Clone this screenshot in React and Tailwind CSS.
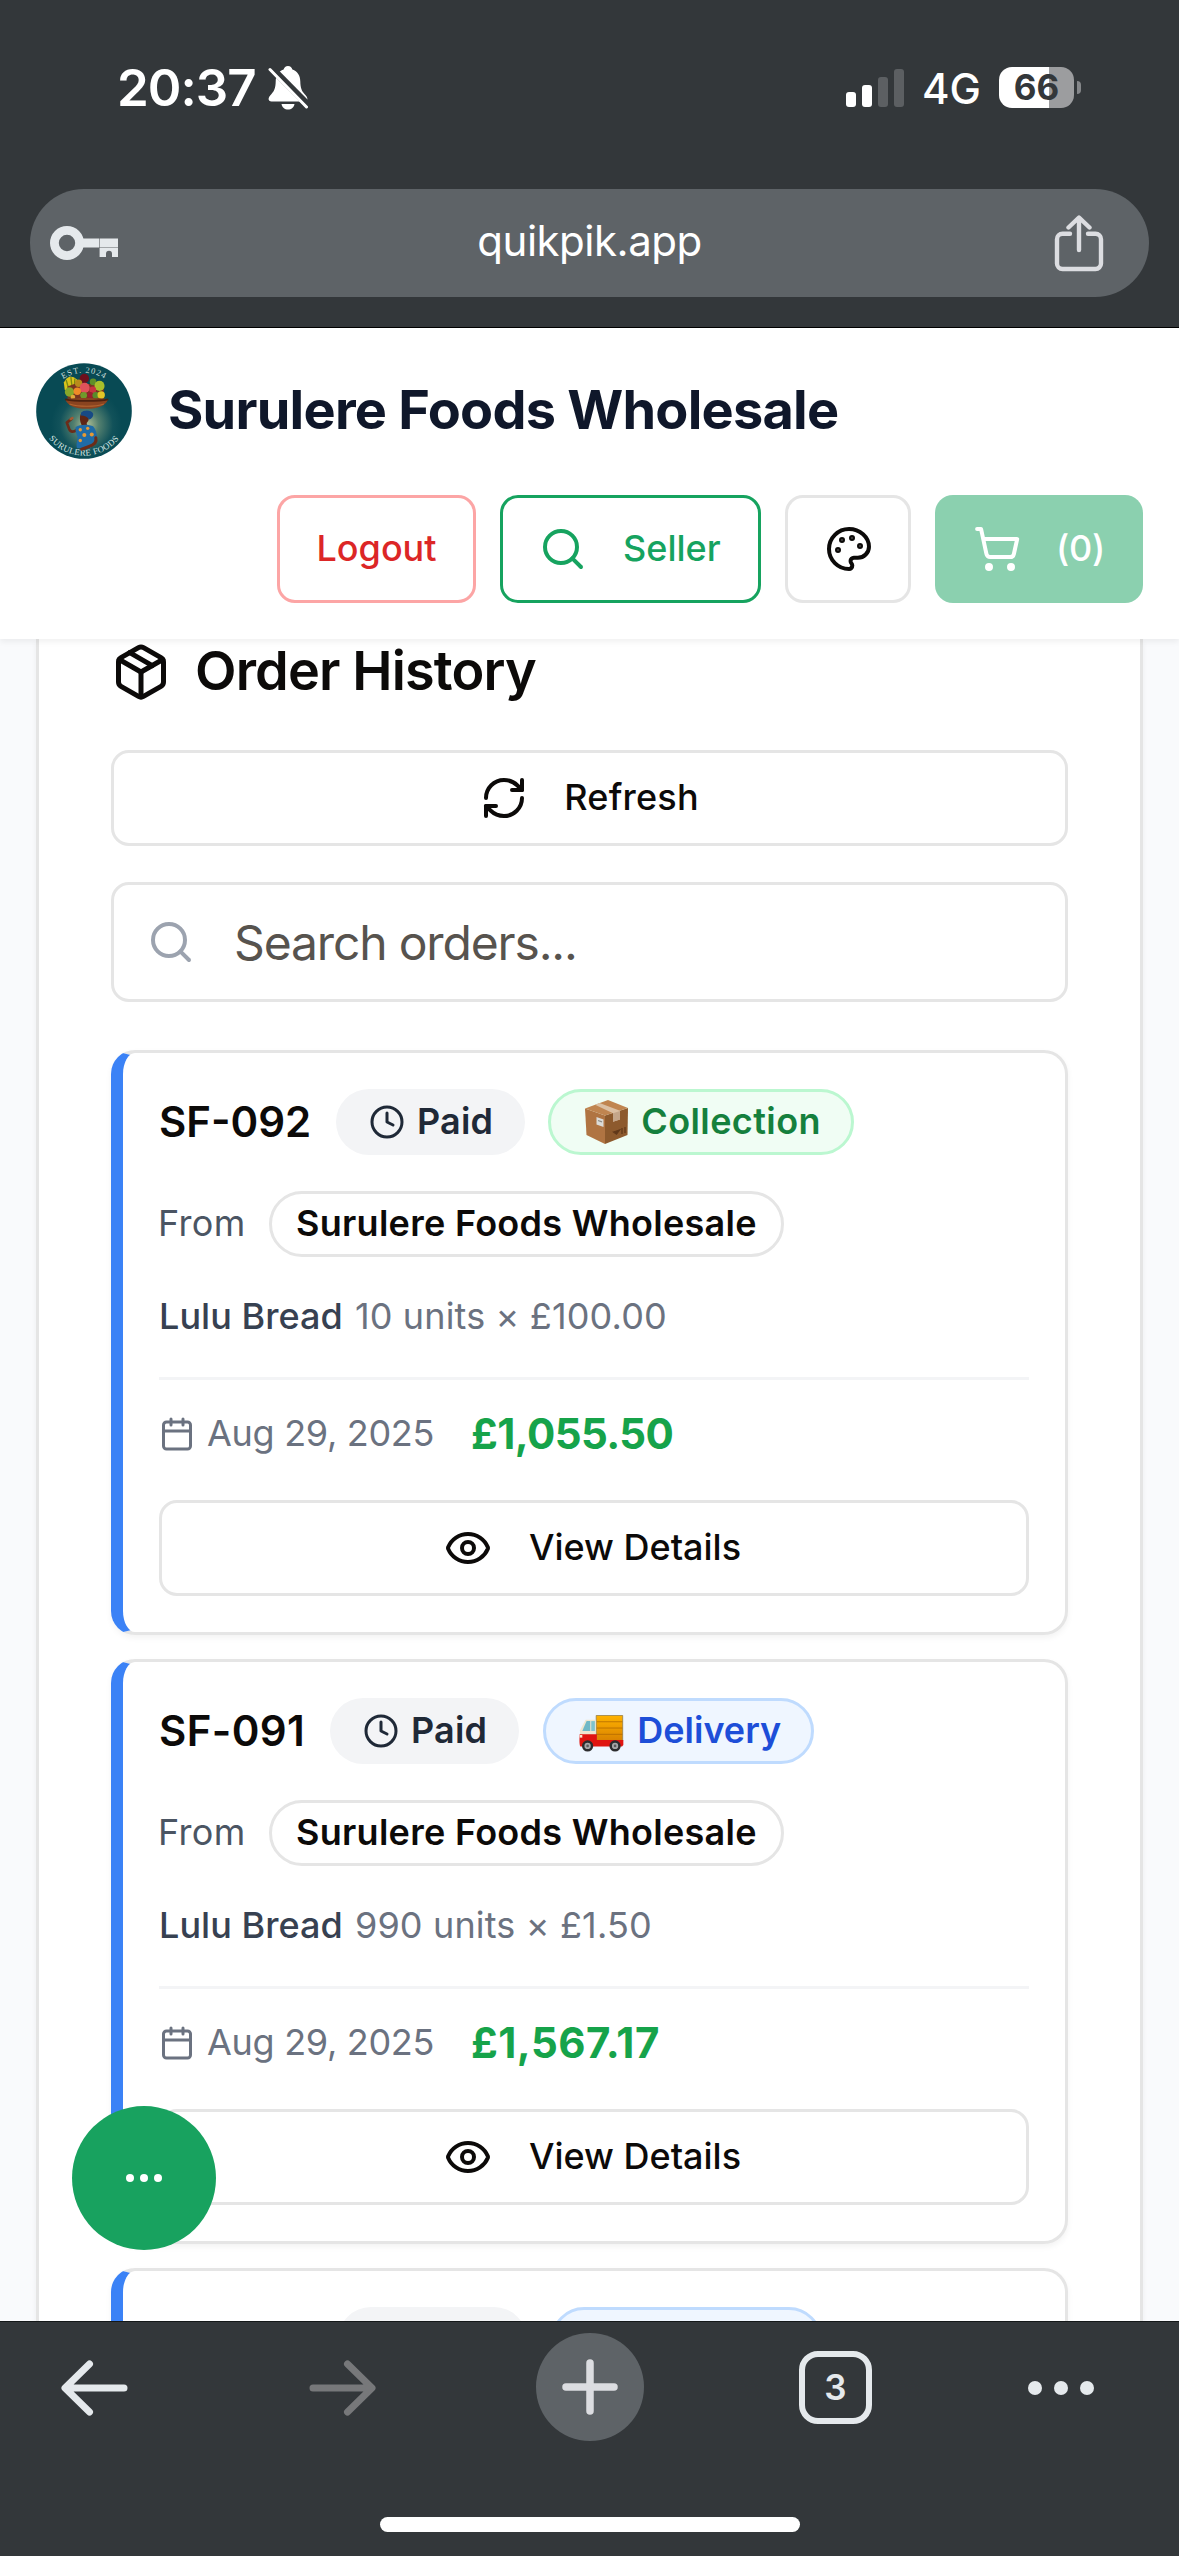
import React from "react";
import { Calendar, Clock, Eye, Package, RefreshCw, Search } from "lucide-react";

function BellOffIcon() {
  return (
    <svg viewBox="0 0 40 44" className="h-[44px] w-[40px]" fill="#fff">
      <path d="M20 0c-2.300 0-4 1.500-4.400 3.600C10.500 5.300 7.800 9.600 7.700 15.500c-.1 6.500-1.500 9.500-4.200 12.500C1.400 30.200.6 31.500.6 33c0 1.500 1.100 2.500 2.900 2.500h33c1.800 0 2.900-1 2.900-2.500 0-1.500-.8-2.800-2.900-5-2.700-3-4.100-6-4.200-12.500-.1-5.900-2.800-10.200-7.900-11.900C24 1.500 22.300 0 20 0z" />
      <path d="M13.500 38h13c-.5 3.300-3.200 5.600-6.500 5.600s-6-2.300-6.500-5.600z" />
      <path d="M3 1.500 41 40" stroke="#33373a" strokeWidth="7" />
      <path d="M2 3.500 38.500 41" stroke="#fff" strokeWidth="3" strokeLinecap="round" />
    </svg>
  );
}

function KeyIcon() {
  return (
    <svg viewBox="0 0 68 34" className="h-[34px] w-[68px]" fill="#e5e9ec">
      <path
        fillRule="evenodd"
        d="M17 0a17 17 0 1 1 0 34 17 17 0 0 1 0-34zm0 8.800a8.200 8.200 0 1 0 0 16.400 8.200 8.200 0 0 0 0-16.400z"
      />
      <path d="M33 12.500h16v9H33zM49.600 12.500H68v9H49.600z" />
      <path d="M49.600 22H68v9h-6v-3.200a3 3 0 0 0-6 0V31h-6.400z" />
    </svg>
  );
}

function ShareIcon() {
  return (
    <svg
      viewBox="0 0 50 57"
      className="h-[57px] w-[50px]"
      fill="none"
      stroke="#dcdde1"
      strokeWidth="4.400"
      strokeLinecap="round"
      strokeLinejoin="round"
    >
      <path d="M16 18.700H8.500a5.500 5.500 0 0 0-5.500 5.500V48.500A5.500 5.500 0 0 0 8.500 54h33a5.500 5.500 0 0 0 5.500-5.500V24.200a5.500 5.500 0 0 0-5.500-5.500H34" />
      <path d="M25 35V3M14.500 12.500 25 2.500l10.500 10" />
    </svg>
  );
}

function PaletteIcon() {
  return (
    <svg
      viewBox="0 0 24 24"
      className="size-12"
      fill="none"
      stroke="#0c0a09"
      strokeWidth="2"
      strokeLinecap="round"
      strokeLinejoin="round"
    >
      <circle cx="13.500" cy="6.500" r=".5" fill="#0c0a09" />
      <circle cx="17.500" cy="10.500" r=".5" fill="#0c0a09" />
      <circle cx="8.500" cy="7.500" r=".5" fill="#0c0a09" />
      <circle cx="6.500" cy="12.500" r=".5" fill="#0c0a09" />
      <path d="M12 2C6.500 2 2 6.500 2 12s4.500 10 10 10c.926 0 1.648-.746 1.648-1.688 0-.437-.18-.835-.437-1.125-.29-.289-.438-.652-.438-1.125a1.640 1.640 0 0 1 1.668-1.668h1.996c3.051 0 5.555-2.503 5.555-5.554C21.965 6.012 17.461 2 12 2z" />
    </svg>
  );
}

function CartIcon() {
  return (
    <svg
      viewBox="0 0 24 24"
      className="size-12"
      fill="none"
      stroke="#fff"
      strokeWidth="2"
      strokeLinecap="round"
      strokeLinejoin="round"
    >
      <circle cx="8" cy="21" r="1" />
      <circle cx="19" cy="21" r="1" />
      <path d="M2.050 2.050h2l2.660 12.420a2 2 0 0 0 2 1.580h9.780a2 2 0 0 0 1.950-1.570l1.650-7.430H5.120" />
    </svg>
  );
}

function BrandLogo() {
  return (
    <svg viewBox="19 42 284 285" className="size-24 shrink-0" role="img">
      <defs>
        <radialGradient id="glow" gradientUnits="userSpaceOnUse" cx="168" cy="225" r="105">
          <stop offset="0" stopColor="#b4c296" />
          <stop offset="0.350" stopColor="#54806f" />
          <stop offset="0.750" stopColor="#12525a" />
          <stop offset="1" stopColor="#084a54" />
        </radialGradient>
        <path id="arcTop" d="M48 184a113 113 0 0 1 226 0" />
        <path id="arcBottom" d="M28 184a133 133 0 0 0 266 0" />
      </defs>
      <circle cx="161" cy="184.500" r="142" fill="url(#glow)" />
      <text fontFamily="Liberation Serif, serif" fontSize="25" letterSpacing="3" fill="#c9dcd8" textAnchor="middle">
        <textPath href="#arcTop" startOffset="50%">EST. 2024</textPath>
      </text>
      <text fontFamily="Liberation Serif, serif" fontSize="26" letterSpacing="1" fill="#dbe8e4" textAnchor="middle">
        <textPath href="#arcBottom" startOffset="50%">SURULERE FOODS</textPath>
      </text>
      <g>
        <path d="M104 122l-3-22 8-12 10-6 12 2 10 8 4 30z" fill="#d9c21c" />
        <path d="M108 92l8 28M122 84l4 32M134 88l-2 28" stroke="#7c8a12" strokeWidth="4" />
        <path d="M112 148V112l20-8h70l18 10v34z" fill="#7a3420" />
        <circle cx="162" cy="88" r="14" fill="#6d0f1c" />
        <circle cx="188" cy="98" r="10" fill="#5f8f28" />
        <circle cx="145" cy="102" r="11" fill="#b98a1c" />
        <circle cx="207" cy="110" r="15" fill="#a9bf2b" />
        <circle cx="118" cy="128" r="14" fill="#86a62a" />
        <circle cx="163" cy="116" r="15" fill="#e0525a" />
        <circle cx="141" cy="126" r="11" fill="#ef8a28" />
        <circle cx="160" cy="138" r="10" fill="#6f9a2b" />
        <circle cx="187" cy="122" r="10" fill="#c73440" />
        <circle cx="180" cy="137" r="9" fill="#9a1f2f" />
        <circle cx="196" cy="138" r="10" fill="#5a8b2a" />
        <circle cx="212" cy="137" r="11" fill="#e3c628" />
        <circle cx="128" cy="143" r="7" fill="#e2a93a" />
      </g>
      <path d="M106 150c20-5 100-5 126 0-6 18-30 28-63 28s-58-10-63-28z" fill="#8a4420" />
      <path d="M105 150c30 6 100 6 128 0" stroke="#4d210f" strokeWidth="5" fill="none" />
      <path d="M118 164c26 9 78 9 102 0" stroke="#b4642f" strokeWidth="3" fill="none" />
      <path d="M151 194c6-4 18-2 24 6 2 10-2 16-6 20l2 14-16 4-2-14c-4-8-6-20-2-30z" fill="#5f2615" />
      <path d="M152 190c6-10 32-10 36 2 2 8-4 16-12 18-4-8-14-12-24-12z" fill="#174a85" />
      <path d="M139 240c-8 8-18 8-22-2l-7-19M110 219l14-11" stroke="#6b2c19" strokeWidth="8" fill="none" strokeLinecap="round" />
      <ellipse cx="124" cy="207" rx="7" ry="4" fill="#a55b34" transform="rotate(-30 124 207)" />
      <path d="M136 232c14-9 40-9 52-2 8 8 12 24 12 36l-14 14-6 16-40-2c-3-10 2-24 2-32-4-10-8-20-6-30z" fill="#1f6ba6" />
      <circle cx="150" cy="240" r="5" fill="#e59a35" />
      <circle cx="172" cy="236" r="5" fill="#e59a35" />
      <circle cx="162" cy="256" r="6" fill="#e59a35" />
      <circle cx="184" cy="254" r="6" fill="#e59a35" />
      <circle cx="150" cy="272" r="5" fill="#e59a35" />
      <path d="M196 264c4 14-8 22-20 26l-22 8" stroke="#6b2c19" strokeWidth="9" fill="none" strokeLinecap="round" />
    </svg>
  );
}

function BoxEmoji() {
  return (
    <svg viewBox="0 0 43 44" className="ml-[4px] mr-[13px] h-[44px] w-[43px]" role="img">
      <path d="M0 8.500 20 15.500V44L1.500 35z" fill="#b07442" />
      <path d="M20 15.500 43 8l-.5 27L20 44z" fill="#8d5a2d" />
      <path d="M0 8.500 23 0l20 8-23 7.500z" fill="#c08550" />
      <path d="M10 4.800 14.500 3 35 10.800v8.700l-7 2.300v-8.500z" fill="#dbc0a4" />
      <path d="M28 13.300l7-2.300v8.500l-7 2.300z" fill="#c4a68a" />
      <path d="M11.500 17l7 2.500v7.500l-7-2.500z" fill="#dcdcd8" />
      <path d="M13 20.500l4 1.400" stroke="#8c8c88" strokeWidth="1.200" />
      <path d="M28.500 32l6-2-3 4zM37 28v6M40 27v6" stroke="#61391a" strokeWidth="1.300" fill="#61391a" />
    </svg>
  );
}

function TruckEmoji() {
  return (
    <svg viewBox="18 46 136 111" className="ml-[3px] mr-[13px] mt-[4px] h-[37px] w-[45px]" role="img">
      <defs>
        <linearGradient id="cargo" x1="0" y1="0" x2="0" y2="1">
          <stop offset="0" stopColor="#ffb300" />
          <stop offset="1" stopColor="#d98200" />
        </linearGradient>
      </defs>
      <path d="M70 47h80v76H70z" fill="url(#cargo)" stroke="#94804a" strokeWidth="2.500" />
      <path d="M72 66h77M72 85h77M72 104h77" stroke="#b36b00" strokeWidth="2.500" />
      <path d="M38 60h30v50H21V92z" fill="#efe6cf" />
      <path d="M41 64h11v30H28z" fill="#6fb8c6" />
      <path d="M55 64h11v30H55z" fill="#7fc3cf" />
      <path d="M20 104h52v17h80v15l-4 5H22c-3-4-3-20-2-37z" fill="#e01410" />
      <path d="M20 106h8v8h-8z" fill="#f8e8d0" />
      <circle cx="44" cy="139" r="17" fill="#2c2c2e" />
      <circle cx="127" cy="139" r="17" fill="#2c2c2e" />
      <circle cx="44" cy="139" r="9.500" fill="#a6a6a8" />
      <circle cx="127" cy="139" r="9.500" fill="#a6a6a8" />
      <circle cx="44" cy="139" r="4" fill="#59595b" />
      <circle cx="127" cy="139" r="4" fill="#59595b" />
    </svg>
  );
}

function StatusBar() {
  return (
    <div className="flex h-[175px] items-center text-white">
      <div className="ml-[117px] text-[51px] font-semibold leading-none tracking-[-1px]">20:37</div>
      <div className="ml-[12px]">
        <BellOffIcon />
      </div>
      <div className="ml-auto mr-[98px] flex items-center">
        <div className="flex h-[38px] items-end gap-[6px]">
          <span className="h-[15px] w-[10px] rounded-[3px] bg-white" />
          <span className="h-[22px] w-[10px] rounded-[3px] bg-white" />
          <span className="h-[30px] w-[10px] rounded-[3px] bg-[#5c5f62]" />
          <span className="h-[38px] w-[10px] rounded-[3px] bg-[#5c5f62]" />
        </div>
        <div className="ml-[18px] mt-[3px] text-[42px] font-medium leading-none">4G</div>
        <div className="ml-[18px] flex h-[41px] w-[75px] items-center justify-center rounded-[13px] bg-[linear-gradient(90deg,#fff_0_50px,#9c9d9f_50px)] text-[35px] font-bold leading-none text-[#33373a]">
          66
        </div>
        <span className="ml-[3px] h-[13px] w-[4px] rounded-r-full bg-[#85878a]" />
      </div>
    </div>
  );
}

function AddressBar() {
  return (
    <div className="mx-[30px] mt-[14px] flex h-[108px] items-center justify-between rounded-full bg-[#5e6367] pl-[20px] pr-[45px]">
      <KeyIcon />
      <span className="ml-[7px] mb-[4px] text-[42px] leading-none tracking-[-0.500px] text-white">quikpik.app</span>
      <ShareIcon />
    </div>
  );
}

function StoreHeader() {
  return (
    <header className="relative z-10 h-[311px] bg-white px-9 pt-[35px] shadow-[0_3px_6px_rgba(0,0,0,0.060)]">
      <div className="flex items-center gap-9">
        <BrandLogo />
        <h1 className="mb-[3px] text-[54px] font-bold leading-none tracking-[-0.750px] text-[#0f172a]">
          Surulere Foods Wholesale
        </h1>
      </div>
      <div className="mt-9 flex justify-end gap-6 text-4xl font-medium">
        <button className="h-[108px] w-[199px] rounded-[18px] border-[3px] border-[#fca5a5] pb-[2px] text-[#dc2626]">
          Logout
        </button>
        <button className="flex h-[108px] w-[261px] items-center gap-9 rounded-[18px] border-[3px] border-[#16a35f] pl-9 text-[#16a35f]">
          <Search className="size-12" />
          <span className="mb-[2px]">Seller</span>
        </button>
        <button className="flex h-[108px] w-[126px] items-center justify-center rounded-[18px] border-[3px] border-[#e5e5e5] pl-px">
          <PaletteIcon />
        </button>
        <button className="flex h-[108px] w-[208px] items-center gap-[35px] rounded-[18px] bg-[#8bd0af] pl-[38px] tracking-[-0.250px] text-white">
          <CartIcon />
          <span className="mb-[2px]">(0)</span>
        </button>
      </div>
    </header>
  );
}

const KINDS = {
  collection: { label: "Collection", Emoji: BoxEmoji, style: "-ml-px border-[#bbf7d0] bg-[#f0fdf4] text-[#15803d] tracking-[0.400px]" },
  delivery: { label: "Delivery", Emoji: TruckEmoji, style: "border-[#bfdbfe] bg-[#eff6ff] text-[#1d4ed8]" },
};

const ORDERS = [
  { id: "SF-092", idWidth: "w-[153px]", kind: "collection", qty: "10 units × £100.00", total: "£1,055.50", totalStyle: "tracking-[-0.600px]" },
  { id: "SF-091", idWidth: "w-[147px] tracking-[0.400px]", kind: "delivery", qty: "990 units × £1.50", total: "£1,567.17", totalStyle: "tracking-[0.450px]" },
  { id: "SF-090", idWidth: "w-[155px]", kind: "delivery", qty: "120 units × £1.50", total: "£1,189.20", totalStyle: "" },
];

function OrderCard({ order }) {
  const { label, Emoji, style } = KINDS[order.kind];
  return (
    <article className="h-[585px] shrink-0 rounded-[24px] border-[3px] border-l-[12px] border-[#e5e5e5] border-l-[#3b82f6] bg-white p-9 text-4xl shadow-[0_3px_6px_rgba(0,0,0,0.050)]">
      <div className="flex h-[66px] items-center gap-6 whitespace-nowrap font-semibold">
        <span className={`${order.idWidth} text-[42px] text-[#0c0a09]`}>{order.id}</span>
        <span className="flex h-[66px] items-center gap-3 rounded-full bg-[#f3f4f6] pl-[33px] pr-[32px] tracking-[0.200px] text-[#1f2937]">
          <Clock className="size-9" />
          <span className="mb-[2px]">Paid</span>
        </span>
        <span className={`flex h-[66px] items-center rounded-full border-[3px] px-[30px] ${style}`}>
          <Emoji />
          <span className="mb-[2px]">{label}</span>
        </span>
      </div>
      <div className="mt-9 flex h-[66px] items-center text-[#4b5563]">
        <span className="-ml-px mb-[2px] w-[111px] tracking-[0.300px]">From</span>
        <span className="flex h-[66px] items-center rounded-full border-[3px] border-[#e5e5e5] px-6 pb-[2px] font-semibold tracking-[0.280px] text-[#0c0a09]">
          Surulere Foods Wholesale
        </span>
      </div>
      <div className="flex h-[120px] items-center gap-3 pb-[2px] tracking-[0.150px] text-[#6b7280]">
        <span className="font-medium tracking-[0.050px] text-[#374151]">Lulu Bread</span>
        <span>{order.qty}</span>
      </div>
      <div className="flex h-[111px] items-center border-t-[3px] border-[#f3f4f6] text-[#6b7280]">
        <Calendar className="size-9" />
        <span className="mb-[2px] ml-3 w-[264px] tracking-[-0.300px]">Aug 29, 2025</span>
        <span className={`text-[42px] font-bold text-[#16a34a] ${order.totalStyle}`}>{order.total}</span>
      </div>
      <button className="mt-3 flex h-24 w-full items-center justify-center gap-[37px] rounded-[18px] border-[3px] border-[#e5e5e5] pr-[3px] font-medium text-[#0c0a09]">
        <Eye className="size-12" />
        <span className="mb-[2px]">View Details</span>
      </button>
    </article>
  );
}

function OrderHistory() {
  return (
    <main className="relative h-[1682px] overflow-hidden bg-[#f9fafc] px-9">
      <section className="h-[1800px] border-x-[3px] border-[#e5e5e5] bg-white px-[72px] pt-[3px] text-[#0c0a09] shadow-[0_3px_6px_rgba(0,0,0,0.050)]">
        <div className="flex h-[60px] items-center gap-6">
          <Package className="size-[60px]" />
          <h2 className="mb-[2px] text-[54px] font-semibold leading-none tracking-[-0.850px]">Order History</h2>
        </div>
        <button className="mt-12 flex h-24 w-full items-center justify-center gap-9 rounded-[18px] border-[3px] border-[#e5e5e5] text-4xl font-medium tracking-[0.200px]">
          <RefreshCw className="size-12" />
          <span className="mb-[2px]">Refresh</span>
        </button>
        <div className="mt-9 flex h-[120px] items-center rounded-[18px] border-[3px] border-[#e5e5e5] pl-[33px]">
          <Search className="size-12 text-[#9ca3af]" />
          <span className="ml-[39px] mt-[2px] text-5xl tracking-[-1.150px] text-[#57534e]">Search orders...</span>
        </div>
        <div className="mt-12 flex flex-col gap-6">
          {ORDERS.map((order) => (
            <OrderCard key={order.id} order={order} />
          ))}
        </div>
      </section>
      <button className="absolute bottom-[71px] left-[72px] flex size-36 items-center justify-center gap-[6px] rounded-full bg-[#18a25f]">
        <span className="size-2 rounded-full bg-white" />
        <span className="size-2 rounded-full bg-white" />
        <span className="size-2 rounded-full bg-white" />
      </button>
    </main>
  );
}

function ArrowIcon({ className }) {
  return (
    <svg
      viewBox="0 0 68 56"
      className={`h-[56px] w-[68px] ${className}`}
      fill="none"
      stroke="currentColor"
      strokeWidth="7"
      strokeLinecap="round"
      strokeLinejoin="round"
    >
      <path d="M63 28H5M28.500 4 4 28l24.500 24" />
    </svg>
  );
}

function BrowserToolbar() {
  return (
    <footer className="h-[235px] border-t border-[#141819] bg-[#33373a]">
      <div className="flex h-[131px] items-center text-[#e5e9ec]">
        <ArrowIcon className="ml-[61px]" />
        <ArrowIcon className="ml-[179px] rotate-180 text-[#77787a]" />
        <span className="ml-[160px] mb-px flex size-[108px] items-center justify-center rounded-full bg-[#5e6367]">
          <svg viewBox="0 0 56 56" className="size-[56px]" stroke="#dcdde1" strokeWidth="7.500" strokeLinecap="round">
            <path d="M28 4v48M4 28h48" />
          </svg>
        </span>
        <span className="ml-[155px] flex size-[73px] items-center justify-center rounded-[19px] border-[6.500px] border-[#e5e9ec] text-[35px] font-semibold leading-none">
          3
        </span>
        <span className="ml-[156px] flex gap-[12px]">
          <i className="size-[14px] rounded-full bg-[#e5e9ec]" />
          <i className="size-[14px] rounded-full bg-[#e5e9ec]" />
          <i className="size-[14px] rounded-full bg-[#e5e9ec]" />
        </span>
      </div>
      <div className="mx-auto mt-[64px] h-[15px] w-[420px] rounded-full bg-white" />
    </footer>
  );
}

export default function App() {
  return (
    <div className="h-[2556px] w-[1179px] overflow-hidden bg-white font-[Inter,sans-serif]">
      <div className="h-[328px] overflow-hidden border-b border-black bg-[#33373a]">
        <StatusBar />
        <AddressBar />
      </div>
      <StoreHeader />
      <OrderHistory />
      <BrowserToolbar />
    </div>
  );
}
